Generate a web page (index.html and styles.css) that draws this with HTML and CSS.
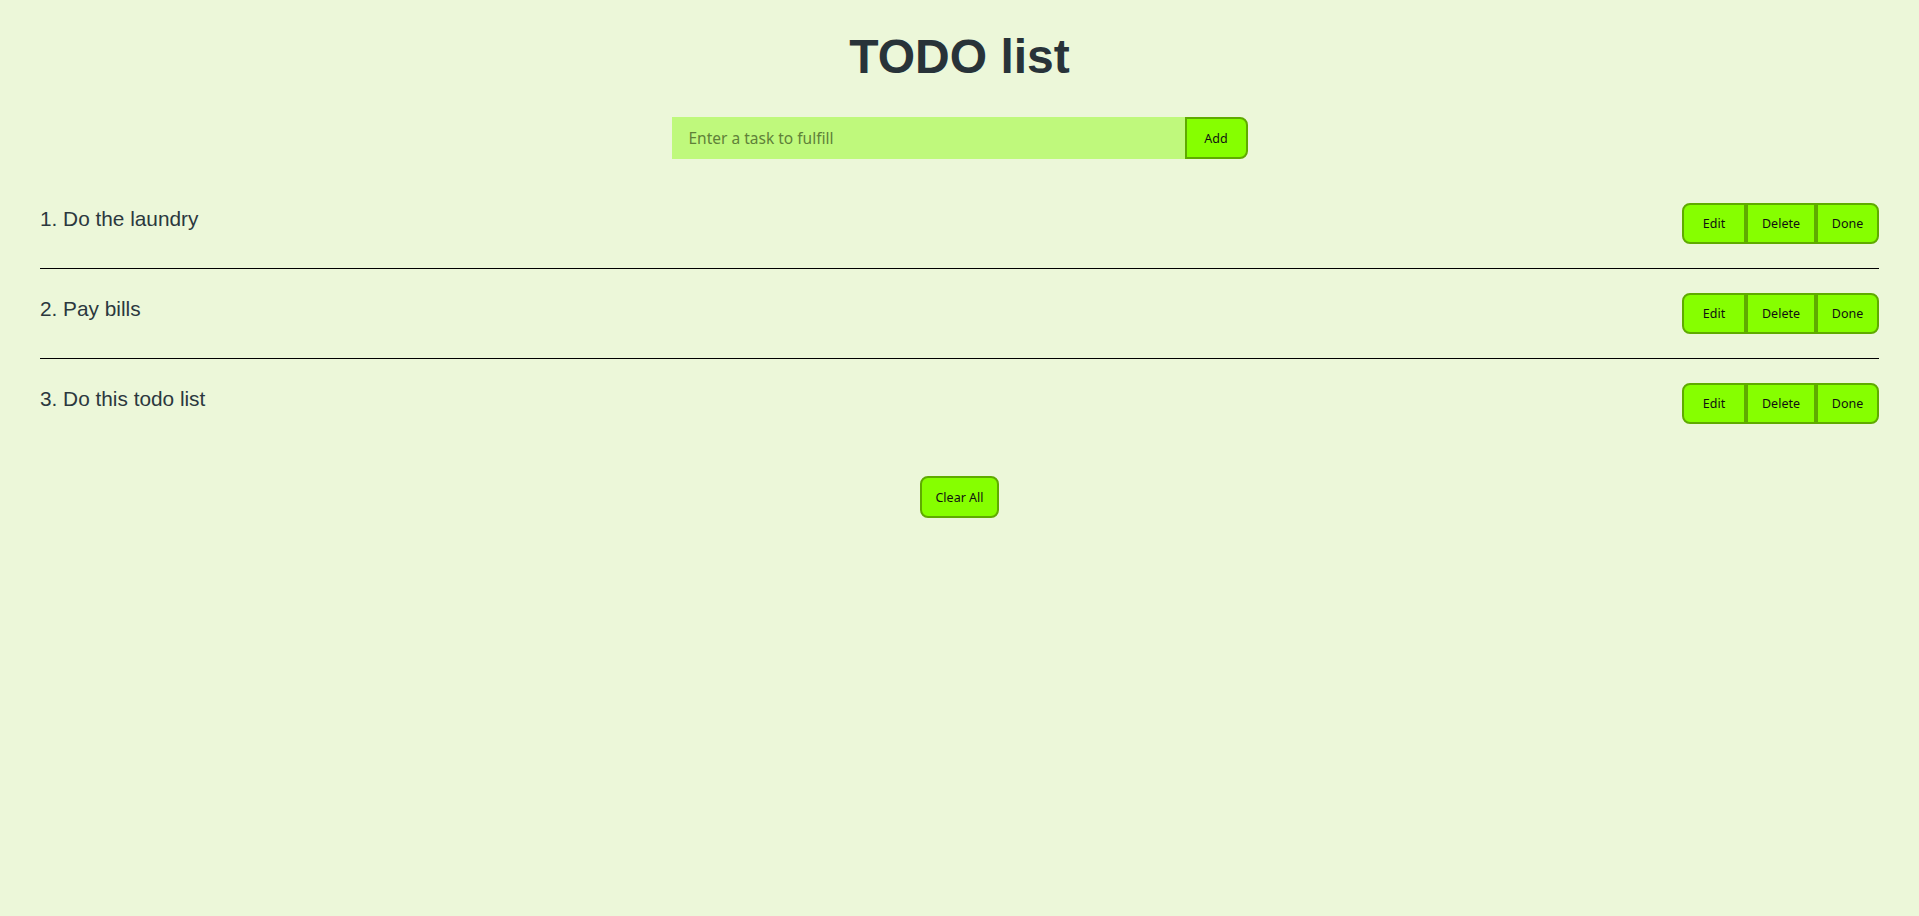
FILE: index.html
```html
<!DOCTYPE html>
<html lang="en">
<head>
<meta charset="utf-8">
<title>TODO list</title>
<link rel="stylesheet" href="styles.css">
</head>
<body>
  <h1 class="title">TODO list</h1>
  <form class="add-form">
    <input class="task-input" type="text" placeholder="Enter a task to fulfill">
    <button class="btn btn-add" type="button">Add</button>
  </form>
  <ul class="todo-list">
    <li class="todo-item">
      <span class="todo-text">1. Do the laundry</span>
      <div class="actions">
        <button class="btn btn-edit" type="button">Edit</button>
        <button class="btn btn-delete" type="button">Delete</button>
        <button class="btn btn-done" type="button">Done</button>
      </div>
    </li>
    <li class="todo-item">
      <span class="todo-text">2. Pay bills</span>
      <div class="actions">
        <button class="btn btn-edit" type="button">Edit</button>
        <button class="btn btn-delete" type="button">Delete</button>
        <button class="btn btn-done" type="button">Done</button>
      </div>
    </li>
    <li class="todo-item">
      <span class="todo-text">3. Do this todo list</span>
      <div class="actions">
        <button class="btn btn-edit" type="button">Edit</button>
        <button class="btn btn-delete" type="button">Delete</button>
        <button class="btn btn-done" type="button">Done</button>
      </div>
    </li>
  </ul>
  <div class="footer">
    <button class="btn btn-clear" type="button">Clear All</button>
  </div>
</body>
</html>
```

FILE: styles.css
```css
html, body {
  margin: 0;
  background: #ecf7d9;
}

body {
  padding: 0 40px;
  font-family: "Liberation Sans", Arial, sans-serif;
  color: #2b383e;
}

.title {
  margin: 29px 0 33px;
  text-align: center;
  font-size: 48px;
  font-weight: bold;
  color: #283339;
}

.add-form {
  display: flex;
  justify-content: center;
  margin: 0;
}

.task-input {
  box-sizing: border-box;
  width: 513px;
  height: 42px;
  padding: 0 17px;
  border: none;
  outline: none;
  background: #bff97c;
  font-family: "Noto Sans", sans-serif;
  font-size: 15.5px;
  color: #2b383e;
}

.task-input::placeholder {
  color: #5f8139;
  opacity: 1;
}

.btn {
  box-sizing: border-box;
  height: 41px;
  margin: 0;
  padding: 0;
  border: 2px solid #5fab00;
  background: #86ff00;
  color: #111;
  font-family: "Noto Sans", sans-serif;
  font-size: 12.5px;
  cursor: pointer;
}

.btn-add {
  width: 63px;
  height: 42px;
  border-radius: 0 8px 8px 0;
}

.todo-list {
  list-style: none;
  margin: 20px 0 0;
  padding: 0;
}

.todo-item {
  display: flex;
  justify-content: space-between;
  align-items: flex-start;
  padding: 24px 0;
  border-bottom: 1px solid #000;
}

.todo-item:last-child {
  border-bottom: none;
}

.todo-text {
  margin-top: 3.5px;
  font-size: 20.8px;
  color: #2b383e;
}

.actions {
  display: flex;
}

.btn-edit {
  width: 64px;
  border-radius: 8px 0 0 8px;
}

.btn-delete {
  width: 70px;
}

.btn-done {
  width: 63px;
  border-radius: 0 8px 8px 0;
}

.footer {
  display: flex;
  justify-content: center;
  margin-top: 28px;
}

.btn-clear {
  width: 79px;
  height: 42px;
  border-radius: 8px;
}
```
